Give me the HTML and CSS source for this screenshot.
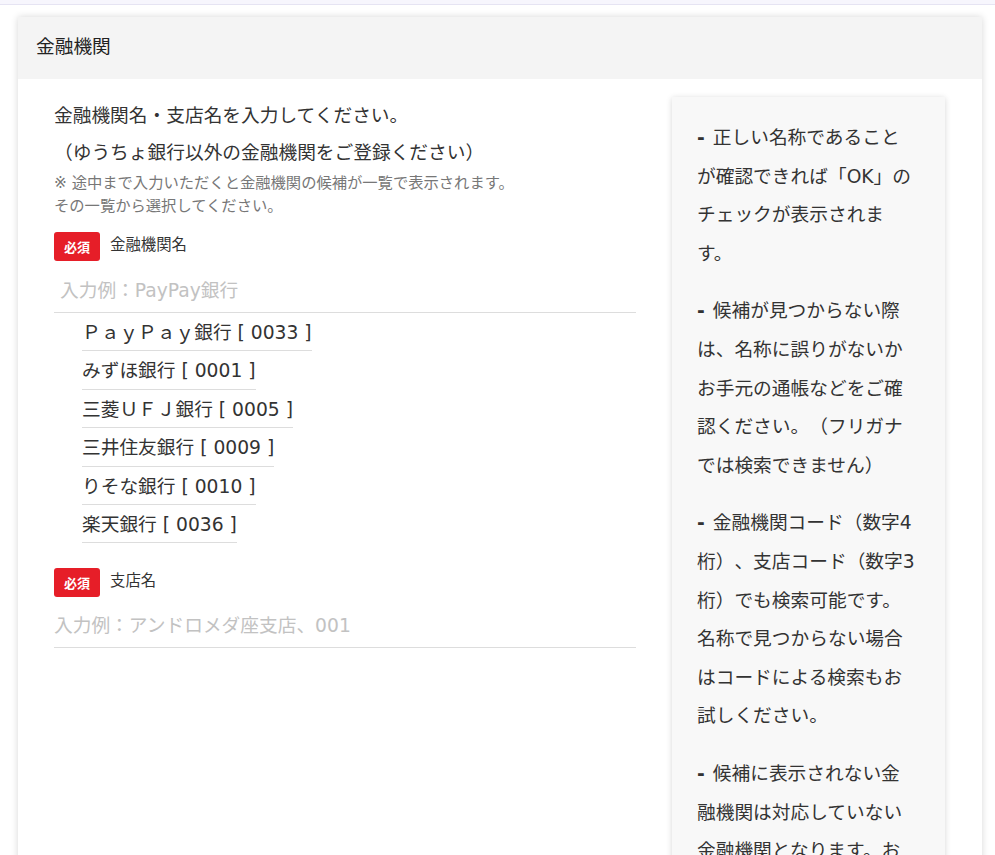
FILE: index.html
```html
<!DOCTYPE html>
<html lang="ja">
<head>
<meta charset="utf-8">
<title>金融機関</title>
<link rel="stylesheet" href="styles.css">
</head>
<body>
<div class="topbar"></div>
<main class="page">
  <section class="card">
    <header class="card-head">金融機関</header>
    <div class="card-body">
      <div class="form-col">
        <p class="lead">金融機関名・支店名を入力してください。</p>
        <p class="lead">（ゆうちょ銀行以外の金融機関をご登録ください）</p>
        <p class="note">※ 途中まで入力いただくと金融機関の候補が一覧で表示されます。<br>その一覧から選択してください。</p>

        <div class="field-label"><span class="badge">必須</span><span class="label-text">金融機関名</span></div>
        <input class="field field-focus" type="text" placeholder="入力例：PayPay銀行">
        <ul class="suggest">
          <li>ＰａｙＰａｙ銀行 [ 0033 ]</li>
          <li>みずほ銀行 [ 0001 ]</li>
          <li>三菱ＵＦＪ銀行 [ 0005 ]</li>
          <li>三井住友銀行 [ 0009 ]</li>
          <li>りそな銀行 [ 0010 ]</li>
          <li>楽天銀行 [ 0036 ]</li>
        </ul>

        <div class="field-label branch"><span class="badge">必須</span><span class="label-text">支店名</span></div>
        <input class="field" type="text" placeholder="入力例：アンドロメダ座支店、001">
      </div>

      <aside class="help">
        <p><b class="dash">-</b>正しい名称であることが確認できれば「OK」のチェックが表示されます。</p>
        <p><b class="dash">-</b>候補が見つからない際は、名称に誤りがないかお手元の通帳などをご確認ください。（フリガナでは検索できません）</p>
        <p><b class="dash">-</b>金融機関コード（数字4桁）、支店コード（数字3桁）でも検索可能です。名称で見つからない場合はコードによる検索もお試しください。</p>
        <p><b class="dash">-</b>候補に表示されない金融機関は対応していない金融機関となります。お手数ですが、別の金融機関をご登録ください。</p>
      </aside>
    </div>
  </section>
</main>
</body>
</html>
```

FILE: styles.css
```css
html, body {
  margin: 0;
  padding: 0;
  background: #ffffff;
}

body {
  font-family: "DejaVu Sans", "Noto Sans CJK JP", sans-serif;
  color: #333333;
  overflow: hidden;
  text-spacing-trim: space-all;
}

.topbar {
  height: 4px;
  background: #f7f6fd;
  border-bottom: 1px solid #e6e4f3;
}

.page {
  padding: 12px 13px 0 18px;
}

.card {
  background: #ffffff;
  box-shadow: 0 0 7px rgba(0, 0, 0, 0.16);
  min-height: 900px;
}

.card-head {
  background: #f4f4f4;
  height: 62px;
  line-height: 60px;
  padding: 0 18px;
  font-size: 18.72px;
  color: #222222;
}

.card-body {
  display: flex;
  gap: 36px;
  padding: 18px 37px 0 36px;
}

.form-col {
  flex: 1;
  min-width: 0;
}

.lead {
  margin: 0;
  font-size: 18.72px;
  line-height: 37px;
}

.note {
  margin: 1px 0 0;
  font-size: 15.3px;
  line-height: 23px;
  color: #777777;
}

.field-label {
  display: flex;
  align-items: flex-start;
  margin-top: 14px;
  height: 30px;
}

.field-label.branch {
  margin-top: 25px;
}

.badge {
  display: inline-flex;
  align-items: center;
  justify-content: center;
  width: 46px;
  height: 29px;
  border-radius: 3px;
  background: #e61e28;
  color: #ffffff;
  font-family: "Noto Sans CJK JP", sans-serif;
  font-weight: 700;
  font-size: 13px;
}

.label-text {
  margin-left: 10px;
  font-size: 15.4px;
  line-height: 27px;
  color: #333333;
}

.field {
  display: block;
  width: 100%;
  box-sizing: border-box;
  height: 47px;
  margin-top: 4px;
  padding: 3px 0 0;
  border: none;
  border-bottom: 1px solid #dddddd;
  background: transparent;
  font-family: "DejaVu Sans", "Noto Sans CJK JP", sans-serif;
  font-size: 18.72px;
  color: #333333;
  outline: none;
}

.field-branch,
.field:last-child {
  height: 46px;
  padding-top: 1px;
}

.field-focus {
  padding-left: 6px;
}

.field::placeholder {
  color: #c2c2c2;
}

.suggest {
  list-style: none;
  margin: 0 0 0 28px;
  padding: 0;
  display: flex;
  flex-direction: column;
  align-items: flex-start;
}

.suggest li {
  font-size: 18.72px;
  line-height: 35.4px;
  padding-top: 2px;
  border-bottom: 1px solid #dddddd;
  white-space: nowrap;
}

.help {
  flex: 0 0 273px;
  box-sizing: border-box;
  background: #f8f8f8;
  box-shadow: 0 1px 6px rgba(0, 0, 0, 0.16);
  padding: 22px 28px 22px 25px;
  font-size: 18.72px;
  line-height: 38.6px;
  color: #333333;
  align-self: flex-start;
}

.help p {
  margin: 0 0 19px;
}

.dash {
  font-weight: 700;
  margin-right: 8px;
}
```
